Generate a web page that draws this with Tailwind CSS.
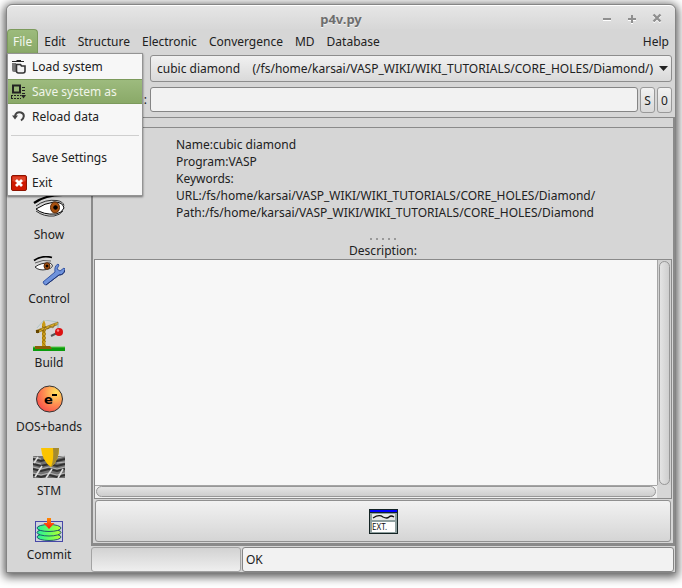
<!DOCTYPE html>
<html lang="en">
<head>
<meta charset="utf-8">
<title>p4v.py</title>
<script src="https://cdn.jsdelivr.net/npm/@tailwindcss/browser@4"></script>
</head>
<body class="flex min-h-screen flex-col bg-white px-1.5 pt-1 pb-[15px] font-['Noto_Sans',sans-serif] text-[12px] leading-[17px] text-[#212121]">
<div class="flex flex-1 flex-col rounded-t-md border border-[#858585] bg-[#d6d6d6] shadow-[0_2px_10px_2px_rgba(0,0,0,0.65)]">

  <header class="relative flex h-6 items-center justify-center rounded-t-md border-t border-white bg-linear-to-b from-[#e6e6e6] to-[#d7d7d7]">
    <h1 class="pt-1 text-[13px] font-bold text-[#6e6e6e] [text-shadow:0_1px_0_#f4f4f4]">p4v.py</h1>
    <div class="absolute top-1 right-2.5 flex gap-[9px] text-[#8f8f8f]">
      <button aria-label="Minimize" class="size-4"><svg viewBox="0 0 16 16" class="size-4" fill="none" stroke-width="2"><path d="M4 10h8" stroke="#fff"/><path d="M4 9h8" stroke="currentColor"/></svg></button>
      <button aria-label="Maximize" class="size-4"><svg viewBox="0 0 16 16" class="size-4" fill="none" stroke-width="2"><path d="M4 10h8M8 5v9" stroke="#fff"/><path d="M4 9h8M8 5v8" stroke="currentColor"/></svg></button>
      <button aria-label="Close" class="size-4"><svg viewBox="0 0 16 16" class="size-4" fill="none" stroke-width="2.4"><path d="M4.500 5.500l7 7M11.500 5.500l-7 7" stroke="#fff"/><path d="M4.500 4.500l7 7M11.500 4.500l-7 7" stroke="currentColor"/></svg></button>
    </div>
  </header>

  <nav class="flex h-6 items-stretch">
    <div class="relative">
      <button class="h-6 rounded-t border border-b-0 border-[#7c9a5c] bg-linear-to-b from-[#9cbb7c] to-[#8aa968] px-[5px] text-[#f3f7ee]">File</button>
      <div class="absolute top-6 left-0 z-10 w-[136px] border border-[#949494] bg-[#f7f7f7] shadow-[0_1px_2px_rgba(0,0,0,0.5)]">
        <button class="flex h-[25px] w-full items-center gap-[5px] px-[3px]">
          <svg viewBox="0 0 16 16" class="size-4"><path d="M1 2h4l1-1h4v1h3v1H1z" fill="#222"/><path d="M1 4h4v9H3Q1 13 1 11z" fill="#777"/><path d="M5.500 5.500h4l1 1.500H14v5q0 2-2 2H7.500q-2 0-2-2z" fill="#f0f0f0" stroke="#333" stroke-width="1.600"/></svg>
          Load system</button>
        <button class="flex h-[25px] w-full items-center gap-[5px] border-y border-[#7c9a5c] bg-linear-to-b from-[#9dbb7e] to-[#8aa968] px-[3px] text-[#f0f5e9]">
          <svg viewBox="0 0 16 16" class="size-4" fill="none" stroke="#222"><path d="M2 1.500h7v7H2z" stroke-width="2"/><path d="M0 11.500h10M.5 12v2M0 14.500h10" stroke-dasharray="2 1"/><path d="M11 3.500h3M11 6.500h3M11 9.500h3"/><path d="M10 11h5l-2.500 3.500z" fill="#222" stroke="none"/></svg>
          Save system as</button>
        <button class="flex h-[25px] w-full items-center gap-[5px] px-[3px]">
          <svg viewBox="0 0 16 16" class="size-4" fill="none" stroke="#444" stroke-width="2"><path d="M4 8C4 4 7 2.500 10 3.500 14 5 13.500 9 10 11.500"/><path d="M1 6.500h6L4 10.500z" fill="#444" stroke="none"/></svg>
          Reload data</button>
        <hr class="mx-[3px] mt-1.5 mb-[9px] border-[#cfcfcf]">
        <button class="flex h-[25px] w-full items-center pl-6">Save Settings</button>
        <button class="flex h-[25px] w-full items-center gap-[5px] px-[3px]">
          <svg viewBox="0 0 16 16" class="size-4 shrink-0"><rect x=".5" y=".5" width="15" height="15" rx="1.500" fill="#cf1800" stroke="#8d1300"/><path d="M1.500 1.500h13V6Q8 9 1.500 6z" fill="#e2563a" opacity=".7"/><path d="M5 5l6 6M11 5l-6 6" stroke="#fff" stroke-width="2.800"/></svg>
          Exit</button>
      </div>
    </div>
    <button class="px-1.5">Edit</button>
    <button class="px-1.5">Structure</button>
    <button class="px-1.5">Electronic</button>
    <button class="px-1.5">Convergence</button>
    <button class="px-1.5">MD</button>
    <button class="px-1.5">Database</button>
    <button class="ml-auto px-1.5">Help</button>
  </nav>

  <form class="flex flex-col gap-[5px] pt-0.5 pr-[3px] pb-1">
    <div class="relative ml-[143px]">
      <select aria-label="System" class="h-[27px] w-full appearance-none rounded-[3px] border border-[#8d8d8d] bg-linear-to-b from-[#f1f1f1] to-[#d9d9d9] pr-4 pl-1.5">
        <option>cubic diamond&nbsp;&nbsp;&nbsp;&nbsp;(/fs/home/karsai/VASP_WIKI/WIKI_TUTORIALS/CORE_HOLES/Diamond/)</option>
      </select>
      <svg viewBox="0 0 9 5" class="pointer-events-none absolute top-[11px] right-1 h-[5px] w-[9px]"><path d="M0 0h9L4.500 5z" fill="#222"/></svg>
    </div>
    <div class="flex">
      <label for="selection" class="w-[143px] pt-1 pr-[3px] text-right">n:</label>
      <input id="selection" type="text" class="h-[25px] min-w-0 flex-1 rounded-[3px] border border-[#858585] bg-[#f2f2f2] px-1.5">
      <button type="button" class="ml-0.5 h-[26px] w-[15px] rounded-[3px] border border-[#999] bg-linear-to-b from-[#f2f2f2] to-[#d9d9d9]">S</button>
      <button type="button" class="ml-0.5 h-[26px] w-[15px] rounded-[3px] border border-[#999] bg-linear-to-b from-[#f2f2f2] to-[#d9d9d9]">0</button>
    </div>
  </form>

  <div class="flex flex-1 border-t border-[#8a8a8a]">
    <aside class="flex w-[84px] shrink-0 flex-col justify-end pb-px">
      <button class="flex h-16 flex-col items-center gap-0.5 pt-[5px]">
        <svg viewBox="0 0 32 32" class="size-8" fill="none" stroke="#000"><path d="M1 11Q12 3 30 3" stroke-width="2.200"/><path d="M3 14Q12 7 24 8.500q6 1 7 5" stroke="#333"/><path d="M3 17Q12 11 21 10q9 0 10 6-2 5-8 6Q10 23 3 17z" fill="#fff"/><ellipse cx="22" cy="15.500" rx="4.500" ry="5.500" fill="#a8510f" stroke="#5a2a08"/><circle cx="22.500" cy="15.500" r="1.800" fill="#000"/><path d="M3 19q8 6 18 5 6-1 9-5" stroke="#333"/></svg>
        Show</button>
      <button class="flex h-16 flex-col items-center gap-0.5 pt-[5px]">
        <svg viewBox="0 0 32 32" class="size-8" fill="none" stroke="#000"><path d="M1 4.500Q9-1 19 1.500" stroke-width="1.800"/><path d="M2 7q8-4 16-2" stroke="#444" stroke-width=".8"/><path d="M2 11Q8 6.500 17 7q2 1 2.500 3-1 3-6 3.500Q6 15 2 11z" fill="#fff" stroke-width=".8"/><ellipse cx="14" cy="10" rx="3" ry="3.300" fill="#a8510f" stroke="#5a2a08"/><circle cx="14" cy="10" r="1" fill="#000"/><path d="M10 26L22 16q-1-6 3-8l1 1-2 4 3 2 4-3 1 1q-1 6-6 6L13 29q-2 0-3-3z" fill="#6f93dc" stroke="#3656a4"/><path d="M13 29L26 19q5 0 6-5" stroke="#1e3270"/></svg>
        Control</button>
      <button class="flex h-16 flex-col items-center gap-0.5 pt-[5px]">
        <svg viewBox="0 0 32 32" class="size-8" fill="none"><path d="M0 27h32v4H0z" fill="#0a9c0d"/><path d="M0 27h32" stroke="#62c951"/><path d="M2 26h15l2 3H2z" fill="#8c5e08"/><path d="M9 26V4l2-4 1.500 4v22z" fill="#c99a16"/><path d="M9 6l4 4-4 4 4 4-4 4 4 4M13 6l-4 4 4 4-4 4 4 4" stroke="#8c6406" stroke-width=".6"/><path d="M3 10.500L25 2v2.500L4 13z" fill="#d8ae2a" stroke="#806010" stroke-width=".6"/><path d="M5 12l2-3 3 2 2-4 3 2 2-3 3 2 2-4" stroke="#705009" stroke-width=".6"/><path d="M3 10h3v3H3z" fill="#654600"/><path d="M11 0L4 8M12 0l12 2" stroke="#9fbfc0" stroke-width=".7"/><path d="M25 3v7" stroke="#86b7c0"/><path d="M18 16l8-4" stroke="#555" stroke-width="2"/><circle cx="26" cy="12" r="4" fill="#dc1111"/><circle cx="25" cy="10.500" r="1.200" fill="#ff8585"/></svg>
        Build</button>
      <button class="flex h-16 flex-col items-center gap-0.5 pt-[5px]">
        <svg viewBox="0 0 32 32" class="size-8"><defs><radialGradient id="electron" cx=".75" cy=".25" r=".8"><stop offset="0" stop-color="#ffe35c"/><stop offset=".55" stop-color="#ff9152"/><stop offset="1" stop-color="#f9574c"/></radialGradient></defs><circle cx="16.500" cy="15" r="13" fill="url(#electron)" stroke="#333"/><text x="11" y="19.500" font-family="DejaVu Sans" font-size="13" font-weight="bold" fill="#000">e</text><path d="M19 11h5" stroke="#000" stroke-width="2"/></svg>
        DOS+bands</button>
      <button class="flex h-16 flex-col items-center gap-0.5 pt-[5px]">
        <svg viewBox="0 0 32 32" class="size-8" fill="none"><path d="M0 8h32v22H0z" fill="#707070"/><path d="M0 11l8 2 8-2 8 2 8-2M0 16l8 2 8-2 8 2 8-2M0 21l8 2 8-2 8 2 8-2M0 27l8 2 8-2 8 2 8-2" stroke="#303030" stroke-width="2"/><path d="M0 9l8 2M24 10l8-2M0 14l8 2M24 15l8-1M0 19l8 2 8-2 8 2 8-2M0 25l8 2 8-2 8 2 8-2" stroke="#b5b5b5"/><path d="M2 29l7-11M13 30l6-9M25 30l5-9M1 15l4-6" stroke="#dedede" stroke-width="1.600"/><path d="M8 0h18q0 13-8 19Q9 13 8 0z" fill="#fbc400"/><path d="M20 0h6q0 13-8 19 3-7 2-19z" fill="#a38a32"/></svg>
        STM</button>
      <button class="flex h-16 flex-col items-center gap-0.5 pt-[5px]">
        <svg viewBox="0 0 32 32" class="size-8"><defs><linearGradient id="disk"><stop offset="0" stop-color="#25ef9a"/><stop offset=".5" stop-color="#65ff65"/><stop offset="1" stop-color="#b4ff2e"/></linearGradient><linearGradient id="arrow" x2="0" y2="1"><stop offset="0" stop-color="#ff8a00"/><stop offset="1" stop-color="#f11"/></linearGradient></defs><rect x="2.500" y="9.500" width="27" height="20" fill="#cfd3dd" stroke="#4747a8"/><g fill="url(#disk)" stroke="#174b67" stroke-width=".9"><ellipse cx="16" cy="25" rx="12" ry="3.500"/><ellipse cx="16" cy="20.500" rx="12" ry="3.500"/><ellipse cx="16" cy="16" rx="12" ry="3.500"/></g><path d="M14 6h4v5h3.500L16 17l-5.500-6H14z" fill="url(#arrow)"/></svg>
        Commit</button>
    </aside>

    <div class="flex min-w-0 flex-1 flex-col">
      <main class="flex flex-1 flex-col border-r-2 border-b-3 border-l-2 border-[#8a8a8a] pt-[9px]">
        <section class="border-t border-[#8a8a8a] pt-2 pl-[83px]">
          <p>Name:cubic diamond</p>
          <p>Program:VASP</p>
          <p>Keywords:</p>
          <p>URL:/fs/home/karsai/VASP_WIKI/WIKI_TUTORIALS/CORE_HOLES/Diamond/</p>
          <p>Path:/fs/home/karsai/VASP_WIKI/WIKI_TUTORIALS/CORE_HOLES/Diamond</p>
        </section>
        <div class="flex justify-center gap-1 pt-[17px] pb-0.5" role="separator">
          <i class="size-0.5 bg-[#999]"></i><i class="size-0.5 bg-[#999]"></i><i class="size-0.5 bg-[#999]"></i><i class="size-0.5 bg-[#999]"></i><i class="size-0.5 bg-[#999]"></i>
        </div>
        <label for="description" class="text-center">Description:</label>
        <div class="mx-px grid flex-1 grid-cols-[1fr_14px] grid-rows-[1fr_13px] border border-[#8a8a8a]">
          <textarea id="description" class="block h-full w-full resize-none bg-[#f7f7f7] p-1 outline-none"></textarea>
          <div class="border-l border-[#a5a5a5] bg-[#d2d2d2] px-px pt-px"><div class="h-full rounded-md border border-[#979797] bg-linear-to-r from-[#e4e4e4] to-[#cecece]"></div></div>
          <div class="border-t border-[#a5a5a5] bg-[#f0f0f0] px-px pb-px"><div class="h-full rounded-md border border-[#979797] bg-linear-to-b from-[#e4e4e4] to-[#cecece]"></div></div>
          <div></div>
        </div>
        <button aria-label="Open in external window" class="mx-0.5 mt-px mb-px flex h-[42px] items-center justify-center rounded-[3px] border border-[#909090] bg-linear-to-b from-[#f2f2f2] to-[#d5d5d5]">
          <svg viewBox="0 0 29 25" class="h-[25px] w-[29px]" fill="none"><path d="M0 0h29v25H0z" fill="#142424"/><path d="M1 1h27v2H1z" fill="#00f"/><path d="M1 4h27v20H1z" fill="#8fa0a0"/><path d="M3 5h23v6H3z" fill="#e8e8e8"/><path d="M3 13h23v10H3z" fill="#fff"/><path d="M4 9q6-4 10-1 4 2 6 0t5 0" stroke="#111" stroke-width="1.300"/><text x="3" y="21" font-family="Noto Sans" font-size="8" fill="#111">EXT.</text></svg>
        </button>
      </main>
      <footer class="flex gap-px pt-px pr-px">
        <div class="h-[25px] w-[150px] rounded-[3px] border border-[#a3a3a3] bg-linear-to-b from-[#d2d2d2] to-[#efefef]"></div>
        <input aria-label="Status" readonly value="OK" class="h-[25px] min-w-0 flex-1 rounded-[3px] border border-[#858585] bg-[#f2f2f2] px-[3px] outline-none">
      </footer>
    </div>
  </div>
</div>
</body>
</html>
